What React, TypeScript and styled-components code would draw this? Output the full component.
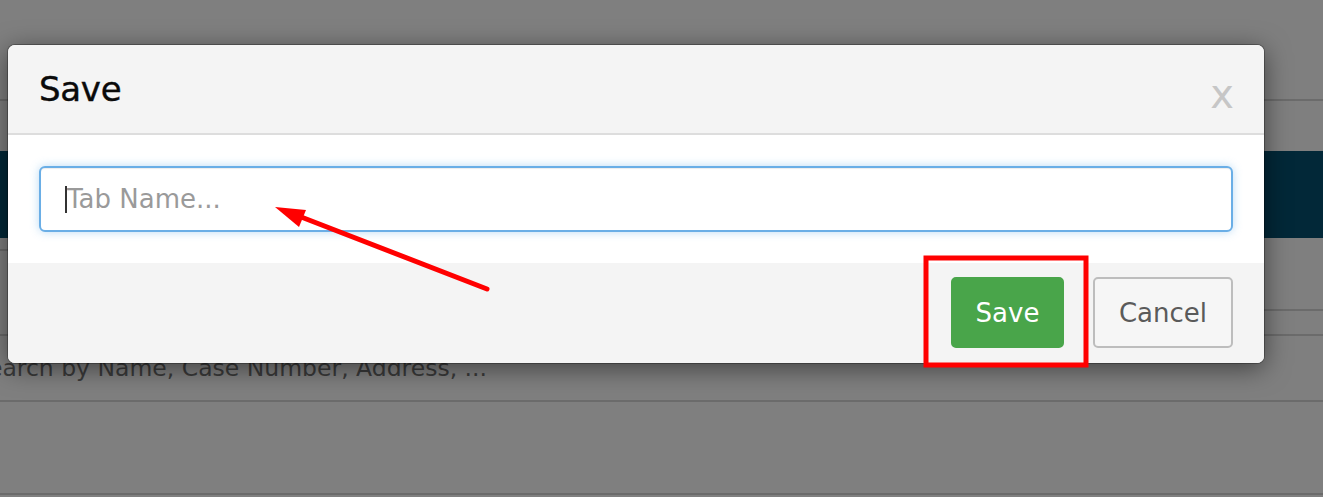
import React from 'react'
import styled, { createGlobalStyle } from 'styled-components'

const GlobalStyle = createGlobalStyle`
  html, body {
    margin: 0;
    padding: 0;
    background: #7f7f7f;
    font-family: 'DejaVu Sans', 'Liberation Sans', sans-serif;
  }
`

// page behind the backdrop, colours already dimmed
const Page = styled.div`
  position: relative;
  width: 1323px;
  height: 497px;
  overflow: hidden;
  background: #7f7f7f;
`

const TopBar = styled.div`
  height: 99px;
  border-bottom: 2px solid #6b6b6b;
`

const NavBand = styled.div`
  height: 87px;
  margin-top: 50px;
  background: #022838;
`

const TabRow = styled.div`
  display: flex;
  justify-content: space-between;
  height: 73px;
`

const TabLine = styled.div<{ $top: number }>`
  width: 50%;
  height: ${({ $top }) => $top}px;
  border-bottom: 2px solid #6b6b6b;
`

const SearchRow = styled.div`
  display: flex;
  align-items: center;
  height: 64px;
  margin-top: 23px;
  border-top: 2px solid #6b6b6b;
  border-bottom: 2px solid #6b6b6b;
  font-size: 23.5px;
  color: #3a3a3a;
  white-space: nowrap;
  text-indent: -27px;
`

const Bottom = styled.div`
  height: 91px;
  border-bottom: 2px solid #6b6b6b;
`

const Modal = styled.div`
  position: absolute;
  left: 8px;
  top: 45px;
  width: 1256px;
  border-radius: 7px;
  overflow: hidden;
  background: #fff;
  box-shadow: 0 0 0 1px rgba(0, 0, 0, 0.28), 0 5px 26px rgba(0, 0, 0, 0.5);
`

const Header = styled.div`
  display: flex;
  align-items: center;
  justify-content: space-between;
  height: 88px;
  padding: 0 30px 0 31px;
  background: #f4f4f4;
  border-bottom: 2px solid #dddddd;
`

const Title = styled.h4`
  margin: 0;
  font-size: 34px;
  font-weight: 400;
  color: #0a0a0a;
  letter-spacing: -0.3px;
  -webkit-text-stroke: 0.4px #0a0a0a;
`

const Close = styled.button`
  border: none;
  background: none;
  padding: 0;
  margin-top: 10px;
  font-family: inherit;
  font-size: 40px;
  line-height: 1;
  color: #c6c6c6;
`

const Body = styled.div`
  padding: 31px;
`

const InputBox = styled.label`
  display: flex;
  align-items: center;
  height: 66px;
  box-sizing: border-box;
  padding: 0 24px;
  border: 2px solid #6aaee6;
  border-radius: 6px;
  background: #fff;
  box-shadow: inset 0 1px 1px rgba(0, 0, 0, 0.075), 0 0 10px rgba(102, 175, 233, 0.45);
`

const Caret = styled.span`
  width: 2px;
  height: 27px;
  background: #333;
`

const Field = styled.input`
  flex: 1;
  border: none;
  outline: none;
  padding: 0;
  font-family: inherit;
  font-size: 26px;
  color: #333;
  background: transparent;

  &::placeholder {
    color: #9a9a9a;
  }
`

const Footer = styled.div`
  display: flex;
  justify-content: flex-end;
  gap: 29px;
  height: 100px;
  box-sizing: border-box;
  padding: 14px 31px 0;
  background: #f4f4f4;
`

const Button = styled.button<{ $primary?: boolean }>`
  width: ${({ $primary }) => ($primary ? '113px' : '140px')};
  height: 71px;
  box-sizing: border-box;
  padding: 0;
  border-radius: 5px;
  border: 2px solid ${({ $primary }) => ($primary ? '#49a54a' : '#bdbdbd')};
  background: ${({ $primary }) => ($primary ? '#49a54a' : '#f6f6f6')};
  color: ${({ $primary }) => ($primary ? '#fff' : '#5a5a5a')};
  font-family: inherit;
  font-size: 26px;
`

const Annotations = styled.svg`
  position: absolute;
  left: 0;
  top: 0;
  pointer-events: none;
`

export default function App() {
  return (
    <Page>
      <GlobalStyle />
      <TopBar />
      <NavBand />
      <TabRow>
        <TabLine $top={11} />
        <TabLine $top={71} />
      </TabRow>
      <SearchRow>Search by Name, Case Number, Address, ...</SearchRow>
      <Bottom />

      <Modal>
        <Header>
          <Title>Save</Title>
          <Close>x</Close>
        </Header>
        <Body>
          <InputBox>
            <Caret />
            <Field placeholder="Tab Name..." />
          </InputBox>
        </Body>
        <Footer>
          <Button $primary>Save</Button>
          <Button>Cancel</Button>
        </Footer>
      </Modal>

      <Annotations width="1323" height="497">
        <line x1="487" y1="289" x2="296" y2="215" stroke="#ff0000" strokeWidth="5" strokeLinecap="round" />
        <polygon points="275,207 306,210 299,227" fill="#ff0000" />
        <rect x="926" y="258" width="160" height="107" fill="none" stroke="#ff0000" strokeWidth="5" />
      </Annotations>
    </Page>
  )
}
